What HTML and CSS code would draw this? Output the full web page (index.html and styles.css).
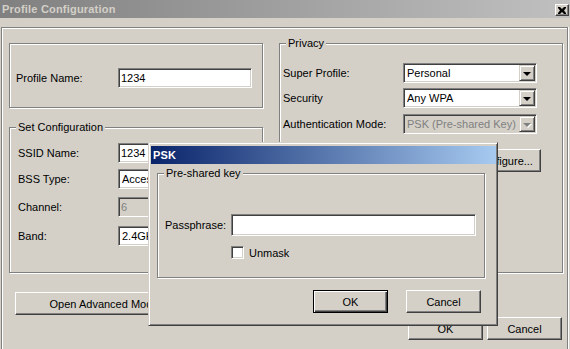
FILE: index.html
```html
<!DOCTYPE html>
<html>
<head>
<meta charset="utf-8">
<link rel="stylesheet" href="styles.css">
</head>
<body>
<div class="win">
  <div class="titlebar inactive">
    <span class="title">Profile Configuration</span>
    <span class="close"><svg width="8" height="7" viewBox="0 0 8 7"><path d="M0 0h2l2 2 2-2h2v1l-2 2.5 2 2.5v1h-2l-2-2-2 2h-2v-1l2-2.5-2-2.5z" fill="#000"/></svg></span>
  </div>
  <div class="frame">
    <div class="cols">
      <div class="leftcol">
        <div class="etched profile">
          <span class="lbl w102">Profile Name:</span>
          <span class="field w134">1234</span>
        </div>
        <div class="etched group setconf">
          <div class="legend">Set Configuration</div>
          <div class="rows sc">
            <div class="row"><span class="lbl w100">SSID Name:</span><span class="field w134">1234</span></div>
            <div class="row s2"><span class="lbl w100">BSS Type:</span><span class="field select w134"><span class="val">Access Point</span><span class="arrow"><i class="tri"></i></span></span></div>
            <div class="row s3"><span class="lbl w100">Channel:</span><span class="field disabled w134">6</span></div>
            <div class="row s4"><span class="lbl w100">Band:</span><span class="field select w134"><span class="val">2.4GHz</span><span class="arrow"><i class="tri"></i></span></span></div>
          </div>
        </div>
        <button class="btn adv">Open Advanced Mode</button>
      </div>
      <div class="etched group privacy">
        <div class="legend">Privacy</div>
        <div class="rows pv">
          <div class="row"><span class="lbl w120">Super Profile:</span><span class="field select w134"><span class="val">Personal</span><span class="arrow"><i class="tri"></i></span></span></div>
          <div class="row"><span class="lbl w120">Security</span><span class="field select w134"><span class="val">Any WPA</span><span class="arrow"><i class="tri"></i></span></span></div>
          <div class="row r3"><span class="lbl w120">Authentication Mode:</span><span class="field select disabled w134"><span class="val">PSK (Pre-shared Key)</span><span class="arrow"><i class="tri"></i></span></span></div>
        </div>
        <button class="btn configure">Configure...</button>
      </div>
    </div>
    <div class="actions">
      <button class="btn">OK</button>
      <button class="btn">Cancel</button>
    </div>
  </div>
</div>

<div class="dialog">
  <div class="titlebar active">
    <span class="title">PSK</span>
  </div>
  <div class="etched group pgroup">
    <div class="legend">Pre-shared key</div>
    <div class="row pass"><span class="lbl w66">Passphrase:</span><span class="field w245"></span></div>
    <div class="row chk"><span class="checkbox"></span><span class="lbl">Unmask</span></div>
  </div>
  <div class="dlg-actions">
    <button class="btn default">OK</button>
    <button class="btn">Cancel</button>
  </div>
</div>
</body>
</html>
```

FILE: styles.css
```css
* { box-sizing: border-box; }
html, body { margin: 0; padding: 0; }
body {
  width: 570px;
  height: 349px;
  overflow: hidden;
  position: relative;
  background: #d4d0c8;
  font-family: "Liberation Sans", Arial, sans-serif;
  font-size: 11px;
  color: #000;
}
.win {
  width: 570px;
  height: 349px;
  display: flex;
  flex-direction: column;
}
.titlebar {
  height: 18px;
  display: flex;
  align-items: center;
  justify-content: space-between;
  padding: 0 1px 0 2px;
  flex: none;
}
.titlebar.inactive { background: linear-gradient(to right, #808080, #c0c0c0); }
.titlebar.active { background: linear-gradient(to right, #0a246a, #a6caf0); }
.title { font-weight: bold; font-size: 11px; line-height: 18px; letter-spacing: 0.2px; }
.inactive .title { color: #d4d0c8; }
.active .title { color: #fff; }
.close {
  align-self: flex-start;
  margin-top: 4px;
  width: 14px;
  height: 12px;
  background: #d4d0c8;
  border: 1px solid;
  border-color: #fff #404040 #404040 #fff;
  box-shadow: inset -1px -1px #808080;
  display: flex;
  align-items: center;
  justify-content: center;
}
.close svg { display: block; }

.frame {
  flex: 1;
  margin: 9px 2px 0 1px;
  border: 1px solid #808080;
  border-bottom: none;
  box-shadow: inset 1px 1px #fff, 1px 0 #fff;
  padding: 15px 4px 0 7px;
}
.cols { display: flex; gap: 16px; align-items: flex-start; }
.leftcol { width: 254px; display: flex; flex-direction: column; }

.etched {
  border: 1px solid #808080;
  box-shadow: inset 1px 1px #fff, 1px 1px #fff;
}
.profile {
  height: 65px;
  display: flex;
  align-items: center;
  padding: 5px 0 0 6px;
}
.group { display: flex; flex-direction: column; }
.legend {
  margin: -7px 0 0 6px;
  padding: 0 2px;
  background: #d4d0c8;
  width: max-content;
  height: 13px;
  line-height: 13px;
}
.setconf { margin-top: 19px; height: 146px; }
.rows { display: flex; flex-direction: column; }
.rows.sc { margin-top: 9px; padding-left: 8px; }
.rows.sc .s2 { margin-top: 6px; }
.rows.sc .s3 { margin-top: 8px; }
.rows.sc .s4 { margin-top: 9px; }
.privacy { width: 284px; height: 230px; }
.rows.pv { margin-top: 13px; padding-left: 3px; gap: 5px; }
.rows.pv .r3 { margin-top: 1px; }
.row { display: flex; align-items: center; }
.lbl { white-space: nowrap; }
.w66 { width: 66px; flex: none; }
.w100 { width: 100px; flex: none; }
.w102 { width: 102px; flex: none; }
.w120 { width: 120px; flex: none; }
.w134 { width: 134px; flex: none; }
.w245 { width: 245px; flex: none; height: 22px !important; }

.field {
  height: 20px;
  background: #fff;
  border: 1px solid;
  border-color: #808080 #fff #fff #808080;
  box-shadow: inset 1px 1px #404040, inset -1px -1px #d4d0c8;
  padding: 0 2px 0 2px;
  display: flex;
  align-items: center;
  white-space: nowrap;
  overflow: hidden;
}
.field.disabled { background: #d4d0c8; color: #808080; }
.field.select { padding: 1px 1px 1px 3px; }
.field.select .val { flex: 1; overflow: hidden; }
.arrow {
  width: 16px;
  height: 16px;
  flex: none;
  background: #d4d0c8;
  border: 1px solid;
  border-color: #d4d0c8 #404040 #404040 #d4d0c8;
  box-shadow: inset 1px 1px #fff, inset -1px -1px #808080;
  display: flex;
  align-items: center;
  justify-content: center;
}
.tri {
  display: block;
  width: 0;
  height: 0;
  border-left: 4px solid transparent;
  border-right: 4px solid transparent;
  border-top: 4px solid #000;
  margin-top: 1px;
}
.disabled .tri {
  border-top-color: #808080;
  filter: drop-shadow(1px 1px 0 #fff);
}

.btn {
  font-family: "Liberation Sans", Arial, sans-serif;
  font-size: 11px;
  color: #000;
  width: 75px;
  height: 23px;
  padding: 0;
  background: #d4d0c8;
  border: 1px solid;
  border-color: #fff #404040 #404040 #fff;
  box-shadow: inset -1px -1px #808080;
  display: flex;
  align-items: center;
  justify-content: center;
  white-space: nowrap;
}
.btn.default {
  border-color: #000;
  box-shadow: inset 1px 1px #fff, inset -1px -1px #404040, inset -2px -2px #808080;
}
.adv { margin: 19px 0 0 6px; width: 178px; }
.configure { margin: 15px 0 0 168px; width: 93px; padding-left: 20px; }
.actions {
  margin-top: 2px;
  padding-right: 1px;
  display: flex;
  justify-content: flex-end;
  gap: 4px;
}

.dialog {
  position: absolute;
  left: 148px;
  top: 142px;
  width: 350px;
  height: 184px;
  background: #d4d0c8;
  border: 1px solid;
  border-color: #d4d0c8 #404040 #404040 #d4d0c8;
  box-shadow: inset 1px 1px #fff, inset -1px -1px #808080;
  padding: 3px 1px 2px 2px;
  display: flex;
  flex-direction: column;
}
.dialog .titlebar { padding-left: 2px; }
.pgroup { margin: 9px 0 0 6px; width: 328px; height: 105px; flex: none; }
.row.pass { margin-top: 34px; padding-left: 7px; }
.row.chk { margin-top: 10px; padding-left: 73px; gap: 5px; }
.checkbox {
  width: 13px;
  height: 13px;
  background: #fff;
  border: 1px solid;
  border-color: #808080 #fff #fff #808080;
  box-shadow: inset 1px 1px #404040, inset -1px -1px #d4d0c8;
}
.dlg-actions {
  margin-top: 12px;
  padding-right: 15px;
  display: flex;
  justify-content: flex-end;
  gap: 18px;
}
```
